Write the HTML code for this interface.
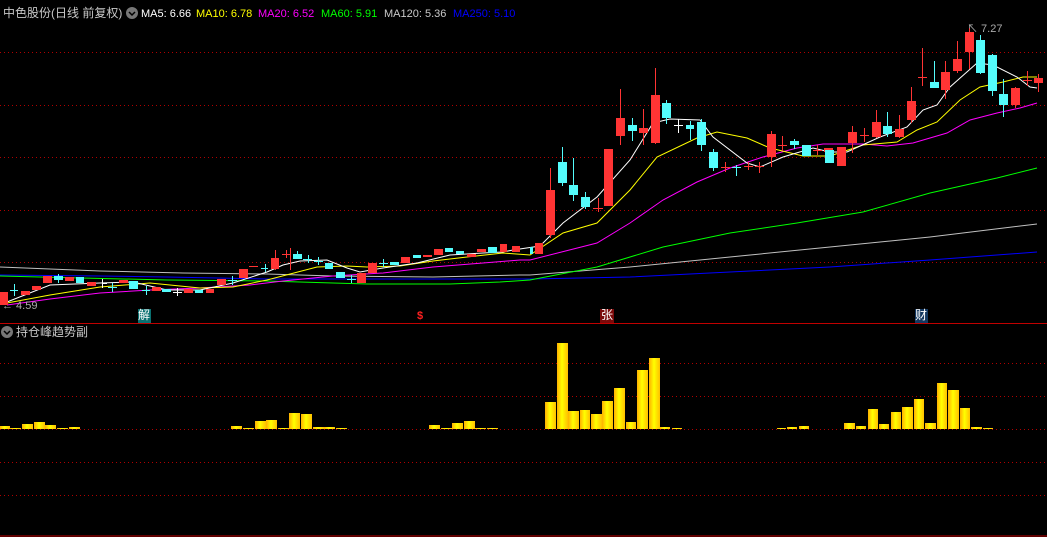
<!DOCTYPE html>
<html><head><meta charset="utf-8"><style>
body{margin:0;background:#000;width:1047px;height:537px;overflow:hidden;font-family:"Liberation Sans","Noto Sans CJK SC",sans-serif}
svg{position:absolute;left:0;top:0}
.t{position:absolute;font-size:12px;white-space:nowrap;line-height:14px}
.m{font-size:11px;top:7px}
</style></head><body>
<svg width="1047" height="537" viewBox="0 0 1047 537">
<defs><linearGradient id="g" x1="0" x2="1"><stop offset="0" stop-color="#ffb000"/><stop offset=".45" stop-color="#ffff00"/><stop offset="1" stop-color="#ffc000"/></linearGradient></defs>
<g stroke="#b00000" stroke-dasharray="1 3" stroke-width="1">
<path d="M0 52.5H1047M0 105.5H1047M0 157.5H1047M0 210.5H1047M0 262.5H1047"/>
<path d="M0 363.5H1047M0 396.5H1047M0 429.5H1047M0 462.5H1047M0 495.5H1047"/>
</g>
<path d="M0 323.5H1047M0 536H1047" stroke="#c00000" stroke-width="1"/>
<g fill="none" stroke-width="1">
<polyline stroke="#0000ff" points="0,275 100,276 167,277 267,279 367,279 520,279 530,279 630,277 730,272 830,267 930,260 1037,252"/>
<polyline stroke="#c0c0c0" points="0,267 100,271 183,273 267,274 333,276 433,277 520,275 530,275 630,267 730,257 830,247 930,237 1037,224"/>
<polyline stroke="#00ff00" points="0,276 40,277 167,280 267,281 333,283 367,284 450,284 500,282 530,280 597,267 663,247 730,233 797,223 863,212 930,193 997,178 1037,168"/>
<polyline stroke="#ff00ff" points="7,305 50,299 100,293 150,290 200,288 250,285 283,281 333,276 383,273 433,267 483,263 520,260 530,260 597,243 630,223 663,200 697,182 730,168 763,157 797,148 823,144 863,144 887,146 913,143 947,133 970,120 997,113 1020,108 1037,103"/>
<polyline stroke="#ffff00" points="7,303 50,295 100,287 150,283 200,288 233,287 267,280 317,267 347,266 367,267 400,266 433,261 467,257 503,253 530,255 563,233 597,223 630,190 657,157 697,138 717,132 747,138 770,148 803,156 830,156 863,145 897,142 917,130 937,122 960,100 980,87 1003,82 1023,77 1037,77"/>
<polyline stroke="#ffffff" points="7,302 50,285 100,283 133,282 167,290 200,290 233,283 267,272 283,265 300,261 327,260 347,268 360,272 383,268 417,263 450,255 483,253 503,252 513,250 540,246 563,223 597,197 630,160 653,123 670,119 700,120 713,137 747,163 760,167 783,157 813,148 830,152 847,152 880,137 907,127 923,110 937,105 950,87 977,63 993,65 1017,77 1030,87 1037,88"/>
</g>
<g fill="#ff3434" stroke="#ff3434">
<path stroke-width="1" d="M550.5 168V238M620.5 89V145M643.5 109V145M655.5 68V144M771.5 131V167M852.5 126V153M876.5 110V138M899.5 115V138M911.5 87V123M945.5 61V99M957.5 41V73M969.5 28V69M1015.5 87V108M1038.5 74V92M290.5 248V270M275.5 250V270M598.5 198V212M725.5 162V172M748.5 162V170M759.5 162V173M782.5 136V151M817.5 145V155M864.5 128V142M922.5 48V86M1027.5 71V86M286.5 250V258"/>
<path stroke-width="1" d="M593 208.5H603M721 167.5H730M744 166.5H753M755 166.5H764M778 145.5H787M813 150.5H822M860 135.5H869M918 77.5H927M1023 80.5H1032M282 254.5H290M249 266.5H258"/>
<g stroke="none">
<rect x="0" y="292" width="8" height="13"/><rect x="21" y="291" width="9" height="4"/><rect x="32" y="286" width="9" height="4"/><rect x="43" y="276" width="9" height="7"/><rect x="65" y="277" width="9" height="4"/><rect x="87" y="282" width="9" height="4"/><rect x="119" y="280" width="9" height="3"/><rect x="152" y="287" width="9" height="4"/><rect x="184" y="289" width="9" height="4"/><rect x="206" y="289" width="8" height="4"/><rect x="217" y="279" width="9" height="6"/><rect x="239" y="269" width="9" height="9"/><rect x="271" y="258" width="8" height="11"/><rect x="357" y="273" width="9" height="10"/><rect x="368" y="263" width="9" height="10"/><rect x="401" y="257" width="9" height="6"/><rect x="423" y="255" width="9" height="2"/><rect x="434" y="249" width="9" height="6"/><rect x="467" y="254" width="9" height="3"/><rect x="477" y="249" width="9" height="3"/><rect x="500" y="244" width="7" height="8"/><rect x="512" y="246" width="8" height="6"/><rect x="535" y="243" width="8" height="11"/>
<rect x="546" y="190" width="9" height="45"/><rect x="604" y="149" width="9" height="57"/><rect x="616" y="118" width="9" height="18"/><rect x="639" y="128" width="9" height="5"/><rect x="651" y="95" width="9" height="48"/><rect x="767" y="134" width="9" height="23"/><rect x="824" y="148" width="9" height="4"/><rect x="837" y="147" width="9" height="19"/><rect x="848" y="132" width="9" height="11"/><rect x="872" y="122" width="9" height="15"/><rect x="895" y="129" width="9" height="8"/><rect x="907" y="101" width="9" height="19"/><rect x="941" y="72" width="9" height="18"/><rect x="953" y="59" width="9" height="12"/><rect x="965" y="32" width="9" height="20"/><rect x="1011" y="88" width="9" height="17"/><rect x="1034" y="78" width="9" height="5"/>
</g></g>
<g fill="#54fcfc" stroke="#54fcfc">
<path stroke-width="1" d="M562.5 147V186M573.5 158V201M585.5 192V209M632.5 118V141M666.5 100V124M690.5 121V140M701.5 119V151M713.5 149V171M736.5 165V176M794.5 139V149M887.5 112V137M934.5 61V88M980.5 35V74M992.5 54V96M1003.5 79V117M14.5 284V296M58.5 274V283M297.5 251V259M112.5 283V292M146.5 286V295M232.5 276V285M265.5 264V272M308.5 255V263M318.5 257V265M351.5 275V283M383.5 259V267"/>
<path stroke-width="1" d="M10 290.5H18M108 287.5H117M142 290.5H150M228 280.5H237M261 268.5H268M303 259.5H312M314 261.5H323M347 279.5H356M379 263.5H388M732 167.5H741"/>
<g stroke="none">
<rect x="54" y="276" width="9" height="4"/><rect x="76" y="277" width="8" height="6"/><rect x="129" y="281" width="9" height="8"/><rect x="162" y="289" width="9" height="3"/><rect x="195" y="290" width="8" height="3"/><rect x="293" y="254" width="9" height="5"/><rect x="325" y="263" width="8" height="6"/><rect x="336" y="272" width="9" height="6"/><rect x="390" y="262" width="9" height="3"/><rect x="413" y="255" width="8" height="3"/><rect x="445" y="248" width="8" height="4"/><rect x="456" y="251" width="8" height="3"/><rect x="488" y="247" width="9" height="6"/><rect x="530" y="247" width="3" height="7"/>
<rect x="558" y="162" width="9" height="21"/><rect x="569" y="185" width="9" height="10"/><rect x="581" y="197" width="9" height="10"/><rect x="628" y="125" width="9" height="6"/><rect x="662" y="103" width="9" height="15"/><rect x="686" y="125" width="8" height="4"/><rect x="697" y="122" width="9" height="23"/><rect x="709" y="152" width="9" height="16"/><rect x="790" y="141" width="9" height="4"/><rect x="802" y="145" width="9" height="11"/><rect x="825" y="150" width="9" height="13"/><rect x="883" y="126" width="9" height="8"/><rect x="930" y="82" width="9" height="6"/><rect x="976" y="40" width="9" height="33"/><rect x="988" y="55" width="9" height="36"/><rect x="999" y="94" width="9" height="11"/>
</g></g>
<g stroke="#fff"><path d="M102 283.5H107M102.5 279V288M173 292.5H182M177.5 288V296M674 125.5H683M678.5 119V133"/></g>
<g fill="url(#g)">
<rect x="0" y="426" width="10" height="3"/><rect x="10" y="428" width="11" height="1"/><rect x="22" y="424" width="11" height="5"/><rect x="34" y="422" width="11" height="7"/><rect x="45" y="425" width="11" height="4"/><rect x="57" y="428" width="11" height="1"/><rect x="69" y="427" width="11" height="2"/>
<rect x="231" y="426" width="11" height="3"/><rect x="243" y="428" width="11" height="1"/><rect x="255" y="421" width="11" height="8"/><rect x="266" y="420" width="11" height="9"/><rect x="278" y="428" width="11" height="1"/><rect x="289" y="413" width="11" height="16"/><rect x="301" y="414" width="11" height="15"/><rect x="313" y="427" width="11" height="2"/><rect x="324" y="427" width="11" height="2"/><rect x="336" y="428" width="11" height="1"/>
<rect x="429" y="425" width="11" height="4"/><rect x="441" y="428" width="11" height="1"/><rect x="452" y="423" width="11" height="6"/><rect x="464" y="421" width="11" height="8"/><rect x="475" y="428" width="11" height="1"/><rect x="487" y="428" width="11" height="1"/>
<rect x="545" y="402" width="11" height="27"/><rect x="557" y="343" width="11" height="86"/><rect x="568" y="411" width="11" height="18"/><rect x="580" y="410" width="10" height="19"/><rect x="591" y="414" width="11" height="15"/><rect x="602" y="401" width="11" height="28"/><rect x="614" y="388" width="11" height="41"/><rect x="626" y="422" width="10" height="7"/><rect x="637" y="370" width="11" height="59"/><rect x="649" y="358" width="11" height="71"/><rect x="660" y="427" width="10" height="2"/><rect x="672" y="428" width="10" height="1"/>
<rect x="777" y="428" width="9" height="1"/><rect x="787" y="427" width="10" height="2"/><rect x="799" y="426" width="10" height="3"/><rect x="844" y="423" width="11" height="6"/><rect x="856" y="426" width="10" height="3"/><rect x="868" y="409" width="10" height="20"/><rect x="879" y="424" width="10" height="5"/><rect x="891" y="412" width="10" height="17"/><rect x="902" y="407" width="11" height="22"/><rect x="914" y="399" width="10" height="30"/><rect x="925" y="423" width="11" height="6"/><rect x="937" y="383" width="10" height="46"/><rect x="948" y="390" width="11" height="39"/><rect x="960" y="408" width="10" height="21"/><rect x="971" y="427" width="11" height="2"/><rect x="983" y="428" width="10" height="1"/>
</g>
<circle cx="132" cy="13" r="6" fill="#777"/><path d="M129 12l3 3 3-3" stroke="#000" stroke-width="1.5" fill="none"/>
<circle cx="7" cy="332" r="6" fill="#777"/><path d="M4 331l3 3 3-3" stroke="#000" stroke-width="1.5" fill="none"/>
<rect x="138" y="309" width="13" height="14" fill="#0a7070"/>
<rect x="600" y="309" width="14" height="14" fill="#7a0a0a"/>
<rect x="915" y="309" width="13" height="14" fill="#143860"/>
</svg>
<div class="t" style="left:3px;top:6px;color:#c8c8c8;font-size:12px">中色股份(日线 前复权)</div>
<div class="t m" style="left:141px;color:#fff">MA5: 6.66</div>
<div class="t m" style="left:196px;color:#ffff00">MA10: 6.78</div>
<div class="t m" style="left:258px;color:#ff00ff">MA20: 6.52</div>
<div class="t m" style="left:321px;color:#00ff00">MA60: 5.91</div>
<div class="t m" style="left:384px;color:#c8c8c8">MA120: 5.36</div>
<div class="t m" style="left:453px;color:#0000ff">MA250: 5.10</div>
<div class="t" style="left:16px;top:325px;color:#c8c8c8">持仓峰趋势副</div>
<div class="t" style="left:2px;top:299px;color:#aaa;font-size:11px">← 4.59</div>
<div class="t" style="left:967px;top:22px;color:#aaa;font-size:11px">↖ 7.27</div>
<div class="t" style="left:138px;top:308px;color:#fff">解</div>
<div class="t" style="left:601px;top:308px;color:#fff">张</div>
<div class="t" style="left:915px;top:308px;color:#fff">财</div>
<div class="t" style="left:417px;top:309px;color:#ff2020;font-size:11px;font-weight:bold">$</div>
</body></html>
